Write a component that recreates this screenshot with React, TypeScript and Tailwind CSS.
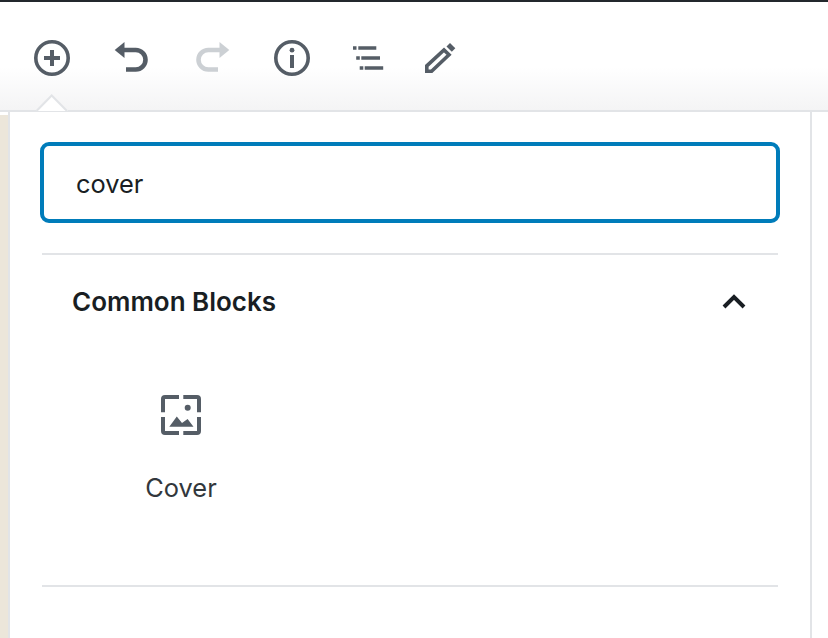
const dark = "#555d66";

function Tool({ x, children, color = dark }: { x: number; children: React.ReactNode; color?: string }) {
  return (
    <svg width="80" height="60" viewBox={`${x} 28 80 60`} fill="none" stroke={color} className="shrink-0">
      {children}
    </svg>
  );
}

export default function App() {
  return (
    <div className="w-[828px] h-[638px] overflow-hidden bg-white relative" style={{ fontFamily: "Inter, 'Noto Sans', sans-serif" }}>
      <div className="h-[2px] bg-[#23282d]" />
      <div className="h-[110px] pt-[26px] pl-3 flex items-start border-b-2 border-[#e2e4e7] bg-gradient-to-b from-white from-[60%] to-[#f4f4f5]">
        <Tool x={12}>
          <circle cx="52" cy="58" r="16.2" strokeWidth="3.6" />
          <path d="M44 58H60M52 50V66" strokeWidth="4" />
        </Tool>
        <Tool x={92}>
          <path d="M122 50H135.75A9.75 9.75 0 0 1 135.75 69.5H126" strokeWidth="4.6" />
          <polygon points="114.7,50 124.5,42 124.5,58" fill={dark} stroke="none" />
        </Tool>
        <Tool x={172} color="#ccd0d4">
          <path d="M222 50H208.25A9.75 9.75 0 0 0 208.25 69.5H218" strokeWidth="4.6" />
          <polygon points="229.3,50 219.5,42 219.5,58" fill="#ccd0d4" stroke="none" />
        </Tool>
        <Tool x={252}>
          <circle cx="292" cy="58" r="16.2" strokeWidth="3.6" />
          <circle cx="292" cy="50.2" r="2.4" fill={dark} stroke="none" />
          <path d="M292 55V68" strokeWidth="4" />
        </Tool>
        <Tool x={332}>
          <path d="M353 48H356.5M358.3 48H376.3M356.2 58H359.8M361.3 58H380M359.7 68H363.3M364.7 68H383.2" strokeWidth="3.6" />
        </Tool>
        <Tool x={412}>
          <polygon points="426.8,71.2 426.8,65.8 444,50 449,54.8 431.6,71.2" strokeWidth="3.6" />
          <polygon points="450,43 455.3,48.2 451.8,51.8 446.5,46.6" fill={dark} stroke="none" />
        </Tool>
      </div>
      <svg className="absolute left-[34px] top-[92px]" width="36" height="21" viewBox="0 0 36 21" fill="none">
        <path d="M2 19L18 3.5L34 19Z" fill="#fff" stroke="none" />
        <path d="M2.5 19L17.7 3.5L33 19" stroke="#e2e4e7" strokeWidth="2" />
      </svg>
      <div className="flex h-[526px]">
        <div className="w-2 mt-[3px] bg-[#ece6da]" />
        <div className="w-[804px] border-x-2 border-[#e2e4e7] bg-white pt-[30px] px-[30px]">
          <div className="h-[81px] w-[740px] rounded-[9px] border-4 border-[#007cba] pl-8 pt-[3px] flex items-center text-[25.4px] text-[#191e23]">
            cover
          </div>
          <div className="mt-[30px] mx-[2px] h-[2px] bg-[#e2e4e7]" />
          <div className="h-[94px] mx-[2px] flex items-center justify-between pl-[30px] pr-[31px]">
            <span className="text-[26px] leading-[32px] font-semibold text-[#191e23]">Common Blocks</span>
            <svg width="26" height="16" viewBox="721 293 26 16" fill="none" stroke="#191e23" strokeWidth="4">
              <path d="M724 306L734 296L744 306" />
            </svg>
          </div>
          <div className="h-[236px] w-[278px] mx-[2px] flex flex-col items-center pt-[45px]">
            <svg width="42" height="42" viewBox="160 394 42 42" fill="none" stroke={dark} strokeWidth="4">
              <path d="M179 397H165A2 2 0 0 0 163 399V412.3M183.3 397H197A2 2 0 0 1 199 399V412.3M163 417V431A2 2 0 0 0 165 433H179M183.3 433H197A2 2 0 0 0 199 431V417" />
              <circle cx="187.7" cy="407.7" r="3" fill={dark} stroke="none" />
              <polygon points="169.3,426.7 176.8,416.5 182,423 187.6,419 193.5,426.7" fill={dark} stroke="none" />
            </svg>
            <span className="mt-[36px] text-[25.4px] leading-[32px] text-[#32373c]">Cover</span>
          </div>
          <div className="mx-[2px] h-[2px] bg-[#e2e4e7]" />
        </div>
      </div>
    </div>
  );
}
